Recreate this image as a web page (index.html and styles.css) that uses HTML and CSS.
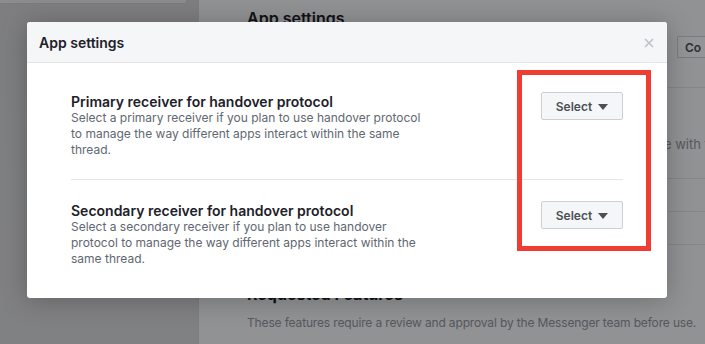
FILE: index.html
```html
<!DOCTYPE html>
<html>
<head>
<meta charset="utf-8">
<link rel="stylesheet" href="styles.css">
</head>
<body>
<div class="page">
  <aside class="sidebar">
    <div class="side-box"></div>
  </aside>
  <main class="content">
    <div class="content-main">
      <h2 class="content-title">App settings</h2>
      <div class="spacer"></div>
      <h3 class="req-title">Requested Features</h3>
      <p class="req-desc">These features require a review and approval by the Messenger team before use.</p>
    </div>
    <div class="content-side">
      <div class="co-btn">Co</div>
      <div class="side-line first"></div>
      <div class="side-text">e with t</div>
      <div class="side-line second"></div>
      <div class="side-line"></div>
      <div class="side-line"></div>
    </div>
  </main>
</div>
<div class="overlay"></div>
<div class="modal">
  <div class="modal-header">
    <span class="modal-title">App settings</span>
    <svg class="modal-close" width="10" height="10" viewBox="0 0 10 10" aria-label="Close"><path d="M1 1 L9 9 M9 1 L1 9" stroke="#bec2c9" stroke-width="1.7" fill="none"/></svg>
  </div>
  <div class="modal-body">
    <div class="row">
      <div class="row-text">
        <div class="row-title">Primary receiver for handover protocol</div>
        <div class="row-desc">Select a primary receiver if you plan to use handover protocol to manage the way different apps interact within the same thread.</div>
      </div>
      <button class="select-btn">Select <span class="caret"></span></button>
    </div>
    <div class="row">
      <div class="row-text">
        <div class="row-title">Secondary receiver for handover protocol</div>
        <div class="row-desc">Select a secondary receiver if you plan to use handover protocol to manage the way different apps interact within the same thread.</div>
      </div>
      <button class="select-btn">Select <span class="caret"></span></button>
    </div>
  </div>
</div>
<div class="highlight"></div>
</body>
</html>
```

FILE: styles.css
```css
html, body {
  margin: 0;
  padding: 0;
}
body {
  width: 705px;
  height: 344px;
  overflow: hidden;
  position: relative;
  font-family: Inter, "Liberation Sans", Arial, sans-serif;
}
.page {
  display: flex;
  width: 705px;
  height: 344px;
}
.sidebar {
  width: 198px;
  flex: none;
  background: linear-gradient(180deg, #d2d3d6 0%, #d6d7da 100%);
  border-right: 1px solid #cfd0d3;
}
.side-box {
  width: 186px;
  height: 3px;
  background: #e9eaec;
  border: 1px solid #cdced1;
  border-top: 0;
  border-left: 0;
  border-bottom-right-radius: 3px;
}
.content {
  flex: 1;
  display: flex;
  background: #f2f3f5;
  overflow: hidden;
}
.content-main {
  width: 420px;
  flex: none;
  padding-left: 48px;
  display: flex;
  flex-direction: column;
}
.content-title {
  margin: 8px 0 0;
  font-size: 16px;
  font-weight: 600;
  color: #1d2129;
}
.spacer {
  flex: 1;
}
.req-title {
  margin: 0;
  font-size: 16px;
  font-weight: 700;
  color: #1d2129;
  line-height: 20px;
}
.req-desc {
  margin: 11px 0 14px;
  font-size: 12px;
  letter-spacing: -0.15px;
  color: #90949c;
  white-space: nowrap;
}
.content-side {
  flex: 1;
  min-width: 0;
  display: flex;
  flex-direction: column;
}
.co-btn {
  margin: 36px 0 0 10px;
  height: 22px;
  box-sizing: border-box;
  border: 1px solid #ccd0d5;
  border-right: 0;
  border-radius: 2px 0 0 2px;
  background: #f6f7f9;
  font-size: 12px;
  font-weight: 600;
  color: #4b4f56;
  padding: 3px 0 0 7px;
}
.side-line {
  height: 1px;
  background: #dddfe2;
  margin-top: 32px;
}
.side-line.first {
  margin-top: 29px;
}
.side-line.second {
  margin-top: 26px;
}
.side-text {
  margin: 48px 0 0 -3px;
  font-size: 13px;
  line-height: 16px;
  color: #90949c;
  white-space: nowrap;
}
.overlay {
  position: absolute;
  inset: 0;
  background: rgba(0, 0, 0, 0.4);
}
.modal {
  position: absolute;
  left: 27px;
  top: 22px;
  width: 640px;
  height: 276px;
  background: #fff;
  border-radius: 3px;
  box-shadow: 0 2px 26px rgba(0, 0, 0, 0.25);
  overflow: hidden;
}
.modal-header {
  height: 41px;
  box-sizing: border-box;
  background: #f5f6f7;
  border-bottom: 1px solid #e5e5e5;
  display: flex;
  align-items: center;
  justify-content: space-between;
  padding: 0 13px 0 12px;
}
.modal-title {
  font-size: 14px;
  font-weight: 600;
  color: #1d2129;
}
.modal-close {
  display: block;
  margin-top: 1px;
}
.modal-body {
  padding: 10px 44px 8px;
}
.row {
  display: flex;
  justify-content: space-between;
  align-items: flex-start;
  padding: 21px 0 21px;
}
.row + .row {
  border-top: 1px solid #e5e5e5;
  padding-top: 23px;
}
.row-text {
  width: 352px;
}
.row-title {
  font-size: 14px;
  font-weight: 600;
  color: #1d2129;
  line-height: 16px;
}
.row-desc {
  font-size: 12px;
  color: #606770;
  line-height: 16px;
}
.select-btn {
  width: 82px;
  height: 28px;
  margin-top: -2px;
  box-sizing: border-box;
  background: #f5f6f7;
  border: 1px solid #ccd0d5;
  border-radius: 2px;
  font-family: Inter, "Liberation Sans", Arial, sans-serif;
  font-size: 12px;
  font-weight: 600;
  color: #4b4f56;
  display: flex;
  align-items: center;
  justify-content: center;
  gap: 6px;
  padding: 0;
}
.caret {
  width: 0;
  height: 0;
  border-left: 5px solid transparent;
  border-right: 5px solid transparent;
  border-top: 6px solid #4b4f56;
  margin-top: 1px;
}
.highlight {
  position: absolute;
  left: 517px;
  top: 70px;
  width: 134px;
  height: 181px;
  box-sizing: border-box;
  border: 5px solid #ef3d33;
}
```
